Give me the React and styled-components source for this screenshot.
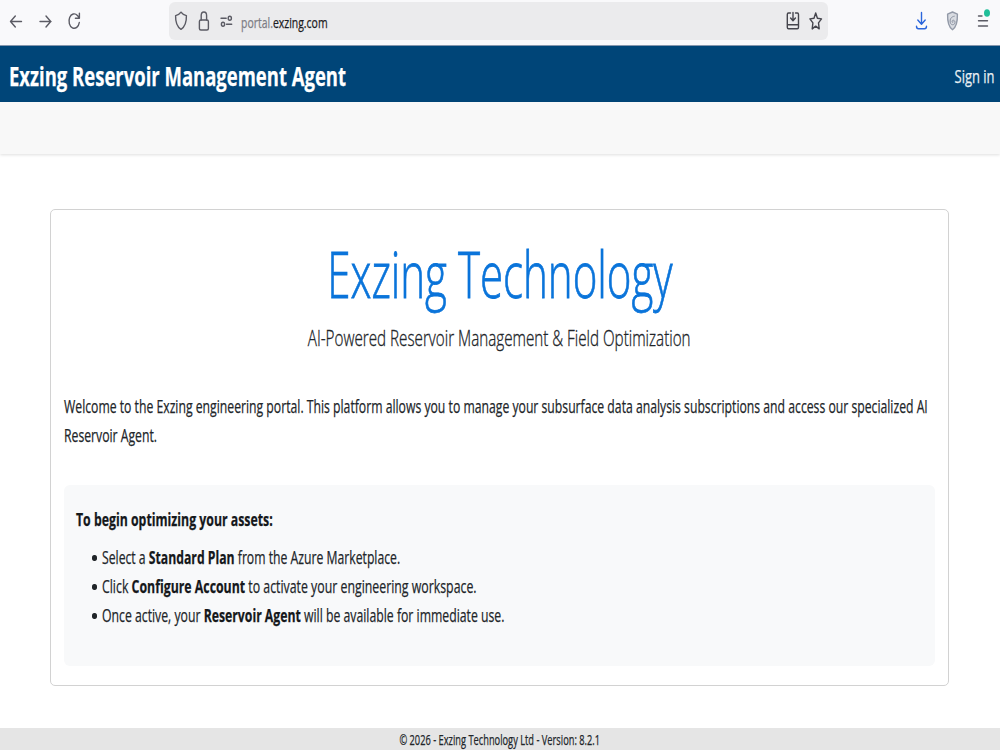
import React from "react";
import styled, { createGlobalStyle, css } from "styled-components";

const GlobalStyle = createGlobalStyle`
  * {
    box-sizing: border-box;
  }

  body {
    margin: 0;
    background: #ffffff;
    color: #212529;
    font-family: "Open Sans", "Noto Sans", sans-serif;
  }
`;

// Condensed text: glyphs are narrowed while the line keeps its height
const condensed = css`
  transform: scaleX(${(p) => p.$squeeze});
  transform-origin: ${(p) => p.$origin || "left"} center;
  white-space: nowrap;
  -webkit-text-stroke: 0.25px currentColor;
`;

const Page = styled.div`
  display: flex;
  flex-direction: column;
  width: 1000px;
  height: 750px;
  overflow: hidden;
`;

const BrowserBar = styled.div`
  display: flex;
  align-items: flex-start;
  flex: none;
  height: 46px;
  background: #f9f9fb;
  border-bottom: 1px solid #8596ad;
`;

const NavButtons = styled.div`
  display: flex;
  width: 169px;
`;

const AddressBar = styled.div`
  display: flex;
  width: 659px;
  height: 38px;
  margin-top: 2px;
  background: #ebebed;
  border-radius: 6px;
`;

const Icon = styled.svg`
  display: block;
  flex: none;
  fill: none;
  stroke: ${(p) => p.$color || "#5b5b64"};
  stroke-width: 1.4;
  stroke-linecap: round;
  stroke-linejoin: round;
`;

const Url = styled.div`
  ${condensed}
  flex: 1;
  padding-top: 9px;
  font-size: 15px;
  line-height: 22px;
  color: #1c1b22;

  span {
    color: #7d7d84;
  }
`;

const Tools = styled.div`
  display: flex;
`;

const Header = styled.header`
  display: flex;
  align-items: center;
  justify-content: space-between;
  flex: none;
  height: 56px;
  padding: 0 6px 0 9px;
  background: #004578;
  color: #ffffff;
`;

const Brand = styled.div`
  ${condensed}
  padding-top: 4px;
  font-size: 27.5px;
  font-weight: 700;
  line-height: 38px;
`;

const SignIn = styled.a`
  ${condensed}
  padding-top: 3px;
  font-size: 18px;
  line-height: 26px;
  color: #e9eff4;
`;

const SubNav = styled.div`
  flex: none;
  height: 52px;
  background: #f8f8f8;
  box-shadow: 0 1px 3px rgba(0, 0, 0, 0.13);
`;

const Main = styled.main`
  flex: 1;
  padding: 55px 51px 0 50px;
`;

const Card = styled.section`
  height: 477px;
  padding: 23px 13px 0;
  border: 1.5px solid #d2d2d2;
  border-radius: 5px;
`;

const Centered = styled.div`
  display: flex;
  justify-content: center;
`;

const Title = styled.h1`
  ${condensed}
  margin: 0;
  font-size: 65px;
  font-weight: 300;
  line-height: 80px;
  color: #0a74da;
  -webkit-text-stroke-width: 0.8px;
`;

const Subtitle = styled.p`
  ${condensed}
  margin: 10px 0 0;
  font-size: 22.5px;
  font-weight: 300;
  line-height: 30px;
  -webkit-text-stroke-width: 0.35px;
`;

const Welcome = styled.p`
  ${condensed}
  width: calc(100% / ${(p) => p.$squeeze});
  margin: 39px 0 0;
  font-size: 18.5px;
  line-height: 28.5px;
  white-space: normal;
`;

const Panel = styled.div`
  height: 181px;
  margin-top: 36px;
  padding: 20px 12px 0;
  background: #f8f9fa;
  border-radius: 6px;
`;

const PanelTitle = styled.div`
  ${condensed}
  font-size: 18.5px;
  font-weight: 700;
  line-height: 28.5px;
  color: #15181b;
`;

const Steps = styled.ul`
  margin: 9px 0 0;
  padding: 0;
  list-style: none;
`;

const Step = styled.li`
  display: flex;
  align-items: center;
  height: 29px;
  padding-left: 16px;

  &::before {
    content: "";
    flex: none;
    width: 4.5px;
    height: 5.5px;
    margin: 2px 5.5px 0 0;
    border-radius: 50%;
    background: #212529;
  }
`;

const StepText = styled.span`
  ${condensed}
  font-size: 18.5px;
  line-height: 28.5px;

  b {
    color: #15181b;
  }
`;

const Footer = styled.footer`
  display: flex;
  justify-content: center;
  flex: none;
  height: 22px;
  background: #e5e5e5;
`;

const Copyright = styled.span`
  ${condensed}
  padding-top: 1px;
  font-size: 14.5px;
  line-height: 22px;
`;

function Browser() {
  return (
    <BrowserBar>
      <NavButtons>
        <Icon width="169" height="45" viewBox="0 0 169 45">
          <path d="M10.5 21.5H21.5M15.3 16L10.5 21.5L15.3 27" />
          <path d="M40 21.5H51M46 16L50.7 21.5L46 27" />
          <path d="M79.3 22.5A5.2 7.2 0 1 1 77.4 15.4L79 17.6M79.4 13.3V18.2H75.4" />
        </Icon>
      </NavButtons>
      <AddressBar>
        <Icon width="72" height="38" viewBox="169 2 72 38">
          <path d="M181 12.2C182.5 14.4 184.5 15.2 186.4 15.6C186.6 21.5 185.5 26.5 181 29.4C176.5 26.5 175.4 21.5 175.6 15.6C177.5 15.2 179.5 14.4 181 12.2Z" />
          <rect x="199.4" y="20" width="9" height="10" rx="1.5" />
          <path d="M201.2 20V15.5C201.2 10.8 206.6 10.8 206.6 15.5V20" />
          <path d="M221 18.3H226.2M226.5 24.3H231.7" />
          <ellipse cx="229.8" cy="18.3" rx="1.6" ry="2" />
          <ellipse cx="223" cy="24.3" rx="1.6" ry="2" />
        </Icon>
        <Url $squeeze={0.697}>
          <span>portal.</span>exzing.com
        </Url>
        <Icon $color="#45454d" width="46" height="38" viewBox="782 2 46 38">
          <path d="M790.5 13H788.5Q787.3 13 787.3 14.5V27.2Q787.3 28.7 788.5 28.7H797.3Q798.5 28.7 798.5 27.2V14.5Q798.5 13 797.3 13H795.5M787.5 24.7H798.3M793 12.5V20.5M790.6 18L793 20.8L795.4 18" />
          <path d="M815.7 13L817.4 18.2L821.5 18.9L818.5 22.9L819.2 28.9L815.7 26.1L812.2 28.9L812.9 22.9L809.9 18.9L814 18.2Z" />
        </Icon>
      </AddressBar>
      <Tools>
        <Icon width="172" height="45" viewBox="828 0 172 45">
          <path
            stroke="#2b66dc"
            d="M921.5 12.5V24M917.8 20L921.5 24.3L925.2 20M916.5 26.3Q916.5 28.8 918.5 28.8H924.5Q926.5 28.8 926.5 26.3"
          />
          <path
            fill="#d9dce2"
            stroke="#939aa8"
            d="M952.5 12L957.4 14.2C957.6 21.5 956.6 26.8 952.5 29.7C948.4 26.8 947.4 21.5 947.6 14.2Z"
          />
          <path
            stroke="#8b92a1"
            strokeWidth="1"
            d="M954.3 16.2C951 16.8 949.8 19 950.2 22.2C950.7 25.8 955 25.3 955 22.4C955 19.8 952.1 19.5 952.1 21.5C952.1 22.5 953 22.7 953.4 22"
          />
          <path d="M978.5 16H982M978.5 20.8H987.5M978.5 26H987.5" />
          <ellipse cx="987" cy="13" rx="3" ry="3.8" fill="#20bf99" stroke="none" />
        </Icon>
      </Tools>
    </BrowserBar>
  );
}

export default function App() {
  return (
    <Page>
      <GlobalStyle />
      <Browser />
      <Header>
        <Brand $squeeze={0.672}>Exzing Reservoir Management Agent</Brand>
        <SignIn $squeeze={0.72} $origin="right">
          Sign in
        </SignIn>
      </Header>
      <SubNav />
      <Main>
        <Card>
          <Centered>
            <Title $squeeze={0.647} $origin="center">
              Exzing Technology
            </Title>
          </Centered>
          <Centered>
            <Subtitle $squeeze={0.676} $origin="center">
              AI-Powered Reservoir Management &amp; Field Optimization
            </Subtitle>
          </Centered>
          <Welcome $squeeze={0.66}>
            Welcome to the Exzing engineering portal. This platform allows you
            to manage your subsurface data analysis subscriptions and access our
            specialized AI Reservoir Agent.
          </Welcome>
          <Panel>
            <PanelTitle $squeeze={0.665}>
              To begin optimizing your assets:
            </PanelTitle>
            <Steps>
              <Step>
                <StepText $squeeze={0.66}>
                  Select a <b>Standard Plan</b> from the Azure Marketplace.
                </StepText>
              </Step>
              <Step>
                <StepText $squeeze={0.666}>
                  Click <b>Configure Account</b> to activate your engineering
                  workspace.
                </StepText>
              </Step>
              <Step>
                <StepText $squeeze={0.662}>
                  Once active, your <b>Reservoir Agent</b> will be available for
                  immediate use.
                </StepText>
              </Step>
            </Steps>
          </Panel>
        </Card>
      </Main>
      <Footer>
        <Copyright $squeeze={0.64} $origin="center">
          © 2026 - Exzing Technology Ltd - Version: 8.2.1
        </Copyright>
      </Footer>
    </Page>
  );
}
